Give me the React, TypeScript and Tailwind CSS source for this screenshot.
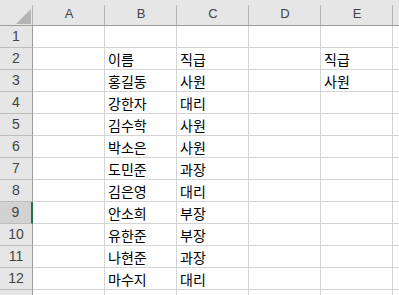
const cols = ['A', 'B', 'C', 'D', 'E'];

const rows: string[][] = [
  ['', '', '', '', ''],
  ['', '이름', '직급', '', '직급'],
  ['', '홍길동', '사원', '', '사원'],
  ['', '강한자', '대리', '', ''],
  ['', '김수학', '사원', '', ''],
  ['', '박소은', '사원', '', ''],
  ['', '도민준', '과장', '', ''],
  ['', '김은영', '대리', '', ''],
  ['', '안소희', '부장', '', ''],
  ['', '유한준', '부장', '', ''],
  ['', '나현준', '과장', '', ''],
  ['', '마수지', '대리', '', ''],
];

const activeRow = 9;

export default function App() {
  return (
    <div className="w-[399px] h-[295px] overflow-hidden bg-white font-['Segoe_UI','Liberation_Sans','Noto_Sans_CJK_KR',sans-serif]">
      <div className="grid grid-cols-[33px_repeat(5,72px)_1fr] grid-rows-[26px] auto-rows-[22px]">
        {/* Corner */}
        <div className="relative bg-[#e6e6e6] border-b border-[#9e9e9e]">
          <div className="absolute right-0 top-[5px] bottom-0 w-px bg-[#b4b4b4]" />
          <svg className="absolute left-[16px] top-[9px]" width="15" height="15" viewBox="0 0 15 15">
            <polygon points="15,0 15,15 0,15" fill="#b4b4b4" />
          </svg>
        </div>
        {cols.map((c) => (
          <div
            key={c}
            className="relative flex items-center justify-center bg-[#e6e6e6] border-b border-[#9e9e9e] text-[13px] text-[#444] pt-[3px]"
          >
            {c}
            <div className="absolute right-0 top-[5px] bottom-0 w-px bg-[#b4b4b4]" />
          </div>
        ))}
        <div className="bg-[#e6e6e6] border-b border-[#9e9e9e]" />

        {rows.map((r, i) => {
          const n = i + 1;
          const active = n === activeRow;
          return [
            <div
              key={`h${n}`}
              className={`flex items-center justify-center border-b text-[14px] text-[#444] ${
                active
                  ? 'bg-[#d2d2d2] border-[#bdbdbd] border-r-2 border-r-[#217346]'
                  : 'bg-[#e6e6e6] border-[#bdbdbd] border-r border-r-[#9e9e9e]'
              }`}
            >
              {n}
            </div>,
            ...r.map((v, j) => (
              <div
                key={`c${n}-${j}`}
                className="flex items-center pl-[3px] pt-[1px] border-r border-b border-[#d4d4d4] text-[14px] text-black font-['Noto_Sans_CJK_KR',sans-serif] leading-none whitespace-nowrap overflow-hidden"
              >
                {v}
              </div>
            )),
            <div key={`x${n}`} className="border-b border-[#d4d4d4]" />,
          ];
        })}

        {/* Row 13, mostly below the fold */}
        <div className="bg-[#e6e6e6] border-r border-[#9e9e9e]" />
        {cols.map((c) => (
          <div key={`r13${c}`} className="border-r border-[#d4d4d4]" />
        ))}
        <div />
      </div>
    </div>
  );
}
